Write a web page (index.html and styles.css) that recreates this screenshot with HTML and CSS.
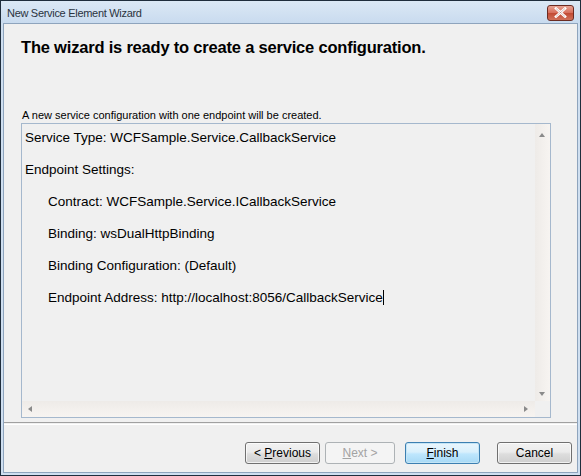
FILE: index.html
```html
<!DOCTYPE html>
<html lang="en">
<head>
    <meta charset="UTF-8">
    <title>New Service Element Wizard</title>
    <link rel="stylesheet" href="styles.css">
</head>
<body>
    <div class="window">
        <div class="titlebar">
            <span class="title">New Service Element Wizard</span>
            <button class="close">
                <svg width="13" height="11" viewBox="0 0 13 11">
                    <path d="M2 1.5 L11 9.5 M11 1.5 L2 9.5" stroke="#fff" stroke-width="2.6" stroke-linecap="square"/>
                    <path d="M2 1.5 L11 9.5 M11 1.5 L2 9.5" stroke="#7a2a20" stroke-width="0.6" fill="none" opacity="0.5"/>
                </svg>
            </button>
        </div>
        <div class="frame">
            <div class="content">
                <h1 class="heading">The wizard is ready to create a service configuration.</h1>
                <p class="intro">A new service configuration with one endpoint will be created.</p>
                <div class="textbox">
                    <div class="text-area">
                        <div class="lines">
                            <p>Service Type: WCFSample.Service.CallbackService</p>
                            <p>Endpoint Settings:</p>
                            <p class="indent">Contract: WCFSample.Service.ICallbackService</p>
                            <p class="indent">Binding: wsDualHttpBinding</p>
                            <p class="indent">Binding Configuration: (Default)</p>
                            <p class="indent">Endpoint Address: http://localhost:8056/CallbackService<span class="caret"></span></p>
                        </div>
                        <div class="vscroll">
                            <span class="arrow up"></span>
                            <span class="arrow down"></span>
                        </div>
                    </div>
                    <div class="hbar">
                        <div class="hscroll">
                            <span class="arrow left"></span>
                            <span class="arrow right"></span>
                        </div>
                        <div class="corner"></div>
                    </div>
                </div>
            </div>
            <div class="separator"></div>
            <div class="buttons">
                <button class="btn">&lt; <u>P</u>revious</button>
                <button class="btn disabled"><u>N</u>ext &gt;</button>
                <button class="btn default"><u>F</u>inish</button>
                <button class="btn">Cancel</button>
            </div>
        </div>
    </div>
</body>
</html>
```

FILE: styles.css
```css
html, body {
    margin: 0;
    padding: 0;
}
body {
    width: 581px;
    height: 476px;
    overflow: hidden;
    font-family: "Liberation Sans", Arial, sans-serif;
}
.window {
    width: 581px;
    height: 476px;
    box-sizing: border-box;
    border: 1px solid #1f2d3c;
    background: #cfdff0;
    display: flex;
    flex-direction: column;
}
.titlebar {
    height: 22px;
    display: flex;
    align-items: center;
    justify-content: space-between;
    padding: 0 6px 0 6px;
    background: linear-gradient(#dbe8f5, #c9dbef);
}
.title {
    font-size: 11px;
    letter-spacing: -0.3px;
    color: #2a3340;
    padding-top: 1px;
}
.close {
    width: 27px;
    height: 16px;
    margin-top: 1px;
    padding: 0;
    border: 1px solid #6b2b22;
    border-radius: 3px;
    background: linear-gradient(#e8a394 0%, #d76e5b 48%, #c24a33 52%, #d0715a 100%);
    display: flex;
    align-items: center;
    justify-content: center;
}
.frame {
    flex: 1;
    margin: 0 2px 2px 2px;
    border: 1px solid #8ea4bd;
    background: #f0f0f0;
    display: flex;
    flex-direction: column;
}
.content {
    flex: 1;
    padding: 0 26px 0 17px;
}
.heading {
    margin: 14px 0 0 0;
    font-size: 16.5px;
    font-weight: bold;
    color: #000;
    letter-spacing: -0.2px;
}
.intro {
    margin: 52px 0 0 1px;
    font-size: 11px;
    color: #000;
}
.textbox {
    margin-top: 2px;
    height: 295px;
    box-sizing: border-box;
    border: 1px solid #a5b8cd;
    display: flex;
    flex-direction: column;
    background: #f0f0f0;
}
.text-area {
    flex: 1;
    display: flex;
}
.lines {
    flex: 1;
    padding: 5px 0 0 3px;
    font-size: 13.5px;
    color: #000;
}
.lines p {
    margin: 0 0 15px 0;
    line-height: 17px;
    white-space: nowrap;
}
.lines .indent {
    padding-left: 23px;
}
.caret {
    display: inline-block;
    width: 1px;
    height: 15px;
    background: #000;
    vertical-align: -3px;
}
.vscroll {
    width: 15px;
    position: relative;
    background: linear-gradient(90deg, #eeebe8, #f7f4f1);
}
.hbar {
    height: 16px;
    display: flex;
}
.hscroll {
    flex: 1;
    position: relative;
    background: linear-gradient(#eeebe8, #f7f4f1);
}
.corner {
    width: 15px;
    background: #f0f0f0;
}
.arrow {
    position: absolute;
    width: 0;
    height: 0;
    border: 3px solid transparent;
}
.arrow.up {
    left: 4px;
    top: 9px;
    border-bottom: 4px solid #8a8a8a;
    border-top: 0;
}
.arrow.down {
    left: 4px;
    bottom: 5px;
    border-top: 4px solid #8a8a8a;
    border-bottom: 0;
}
.arrow.left {
    left: 6px;
    top: 5px;
    border-right: 4px solid #8a8a8a;
    border-left: 0;
}
.arrow.right {
    right: 7px;
    top: 5px;
    border-left: 4px solid #8a8a8a;
    border-right: 0;
}
.separator {
    height: 1px;
    border-top: 1px solid #a0a0a0;
    border-bottom: 1px solid #ffffff;
}
.buttons {
    height: 47px;
    display: flex;
    justify-content: flex-end;
    align-items: flex-start;
    padding: 17px 5px 0 0;
    box-sizing: border-box;
}
.btn {
    width: 75px;
    height: 22px;
    margin-left: 5px;
    padding: 0;
    font-family: "Liberation Sans", Arial, sans-serif;
    font-size: 12px;
    color: #000;
    border: 1px solid #707070;
    border-radius: 3px;
    background: linear-gradient(#f2f2f2 0%, #ebebeb 45%, #dddddd 55%, #cfcfcf 100%);
    box-shadow: inset 0 0 0 1px rgba(255, 255, 255, 0.7);
}
.btn.disabled {
    width: 70px;
    color: #a3a3a3;
    border-color: #adb2b5;
    background: #f4f4f4;
    box-shadow: none;
}
.btn.default {
    margin-left: 10px;
    border-color: #3c7fb1;
    background: linear-gradient(#eaf6fd 0%, #d9f0fc 45%, #bee6fd 55%, #a7d9f5 100%);
    box-shadow: inset 0 0 0 1px #c4e5f6;
}
.btn.default + .btn {
    margin-left: 17px;
}
```
